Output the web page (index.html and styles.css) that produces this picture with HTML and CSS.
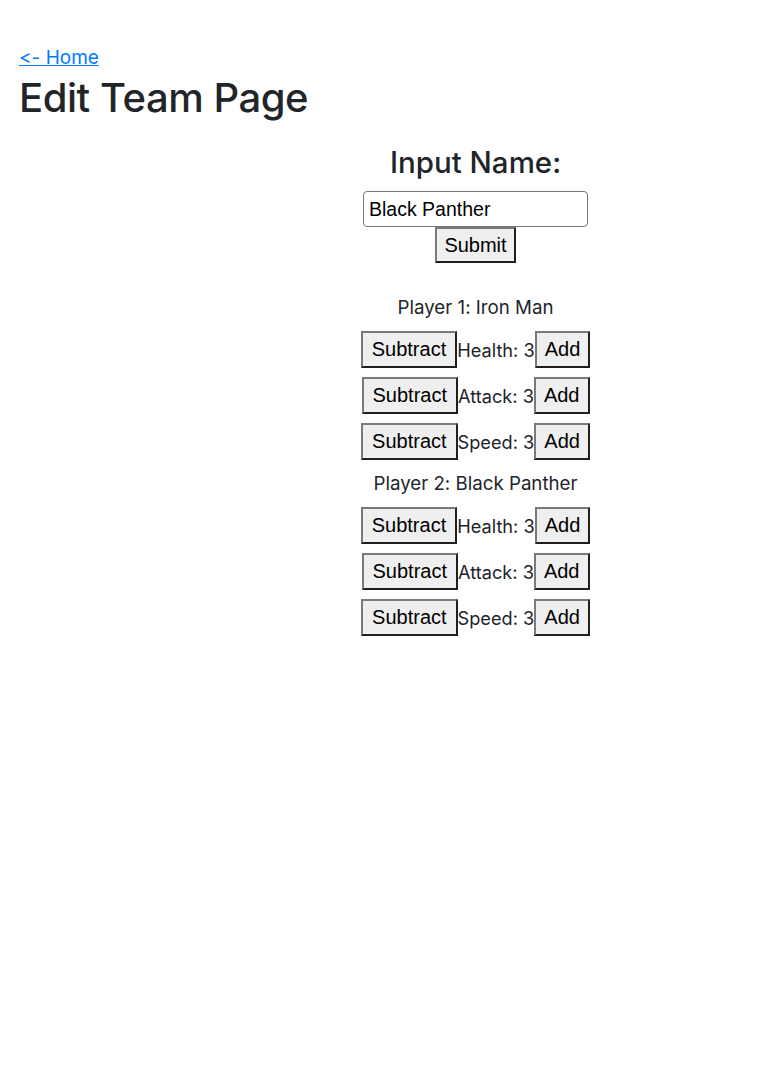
FILE: index.html
```html
<!DOCTYPE html>
<html lang="en">
<head>
<meta charset="utf-8">
<title>Edit Team Page</title>
<link rel="stylesheet" href="styles.css">
</head>
<body>
<div class="page">
  <a class="home-link" href="#">&lt;- Home</a>
  <h1 class="title">Edit Team Page</h1>
  <div class="layout">
    <div class="spacer"></div>
    <main class="editor">
      <h3 class="input-heading">Input Name:</h3>
      <form class="name-form">
        <input class="name-input" type="text" value="Black Panther">
        <button class="btn" type="button">Submit</button>
      </form>
      <div class="players">
        <section class="player">
          <p class="player-name">Player 1: Iron Man</p>
          <div class="stat-row"><button class="btn" type="button">Subtract</button><span class="stat">Health: 3</span><button class="btn btn-add" type="button">Add</button></div>
          <div class="stat-row"><button class="btn" type="button">Subtract</button><span class="stat">Attack: 3</span><button class="btn btn-add" type="button">Add</button></div>
          <div class="stat-row"><button class="btn" type="button">Subtract</button><span class="stat">Speed: 3</span><button class="btn btn-add" type="button">Add</button></div>
        </section>
        <section class="player">
          <p class="player-name">Player 2: Black Panther</p>
          <div class="stat-row"><button class="btn" type="button">Subtract</button><span class="stat">Health: 3</span><button class="btn btn-add" type="button">Add</button></div>
          <div class="stat-row"><button class="btn" type="button">Subtract</button><span class="stat">Attack: 3</span><button class="btn btn-add" type="button">Add</button></div>
          <div class="stat-row"><button class="btn" type="button">Subtract</button><span class="stat">Speed: 3</span><button class="btn btn-add" type="button">Add</button></div>
        </section>
      </div>
    </main>
  </div>
</div>
</body>
</html>
```

FILE: styles.css
```css
html, body {
  margin: 0;
  padding: 0;
  background: #ffffff;
}

body {
  font-family: Inter, "Liberation Sans", Arial, sans-serif;
  font-feature-settings: "calt" 0, "liga" 0;
  color: #212529;
}

.page {
  padding: 46px 0 0 19px;
}

.home-link {
  display: inline-block;
  font-size: 19px;
  line-height: 24px;
  color: #007bff;
  text-decoration: underline;
}

.title {
  margin: 4px 0 0 0;
  font-size: 40px;
  line-height: 48px;
  font-weight: 500;
  letter-spacing: -0.45px;
}

.layout {
  display: grid;
  grid-template-columns: 148px 1fr;
}

.editor {
  display: flex;
  flex-direction: column;
  align-items: center;
}

.input-heading {
  margin: 23px 0 0 0;
  font-size: 29.5px;
  line-height: 34px;
  font-weight: 500;
}

.name-form {
  margin-top: 12px;
  display: flex;
  flex-direction: column;
  align-items: center;
}

.name-input {
  box-sizing: border-box;
  width: 225px;
  height: 36px;
  margin: 0;
  padding: 0 5px;
  border: 1px solid #767676;
  border-radius: 4px;
  font-family: "Liberation Sans", Arial, sans-serif;
  font-size: 19.5px;
  color: #000;
  background: #fff;
}

.btn {
  box-sizing: border-box;
  height: 37px;
  margin: 0;
  padding: 0 9px;
  font-family: "Liberation Sans", Arial, sans-serif;
  font-size: 20px;
  color: #000;
  background: #efefef;
  border-width: 2px;
  border-style: solid;
  border-color: #7a7a7a #1f1f1f #1f1f1f #7a7a7a;
  border-radius: 0;
}

.btn-add {
  padding: 0 8px;
}

.name-form .btn {
  height: 36px;
  padding: 0 7px;
}

.players {
  margin-top: 33px;
  display: flex;
  flex-direction: column;
  gap: 12px;
}

.player {
  display: flex;
  flex-direction: column;
  align-items: center;
  gap: 9px;
}

.player-name {
  margin: 0 0 2px 0;
  font-size: 18.7px;
  line-height: 24px;
}

.stat-row {
  display: flex;
  align-items: center;
}

.stat {
  font-size: 18.2px;
  line-height: 24px;
}
```
